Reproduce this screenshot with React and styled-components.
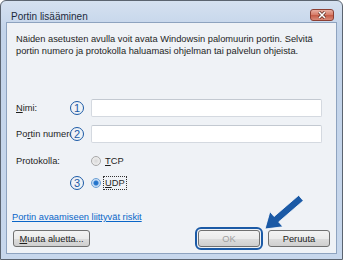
import React from "react";
import styled, { createGlobalStyle } from "styled-components";

const GlobalStyle = createGlobalStyle`
  html, body {
    margin: 0;
    padding: 0;
    background: #ffffff;
  }
  body {
    font-family: "Liberation Sans", Arial, sans-serif;
  }
`;

const Window = styled.div`
  position: relative;
  width: 343px;
  height: 260px;
  box-sizing: border-box;
  border: 1px solid #5b6470;
  border-radius: 6px 6px 0 0;
  background: linear-gradient(#d5e1f0, #c3d4ea 30px, #c7d7ec);
  display: flex;
  flex-direction: column;
  overflow: hidden;
`;

const TitleBar = styled.div`
  height: 22px;
  display: flex;
  align-items: center;
  justify-content: space-between;
  padding: 0 8px 0 10px;
`;

const Title = styled.span`
  font-size: 10px;
  color: #1c2a3c;
  margin-top: 10px;
`;

const CloseButton = styled.div`
  width: 22px;
  height: 10px;
  margin-top: 6px;
  border: 1px solid #8c3f33;
  border-radius: 3px;
  background: linear-gradient(#e8b0a3, #d67a66 50%, #c45a45 51%, #d98a78);
  display: flex;
  align-items: center;
  justify-content: center;
`;

const Client = styled.div`
  flex: 1;
  margin: 0 5px 5px;
  border: 1px solid #8ea3bf;
  background: #eff2f6;
  display: flex;
  flex-direction: column;
  padding: 10px 6px 6px 5px;
  font-size: 9.3px;
  color: #1e1e1e;
`;

const Intro = styled.p`
  margin: 0 0 0 4px;
  line-height: 12px;
`;

const Form = styled.div`
  display: grid;
  grid-template-columns: 54px 21px 1fr;
  align-items: center;
  margin: 42px 8px 0 4px;
`;

const Label = styled.span`
  grid-column: 1;
  margin-top: ${(p) => p.$top || 0}px;
  white-space: nowrap;
`;

const Marker = styled.span`
  grid-column: 2;
  position: relative;
  margin-top: ${(p) => p.$top || 0}px;
  width: 14px;
  height: 14px;
  box-sizing: border-box;
  border: 1px solid #1b5aa6;
  border-radius: 50%;
  color: #1b5aa6;
  font-size: 11px;
  line-height: 12px;
  text-align: center;
  background: #eff2f6;
`;

const Input = styled.div`
  grid-column: 3;
  margin-top: ${(p) => p.$top || 0}px;
  height: 18px;
  box-sizing: border-box;
  border: 1px solid #d4d9e0;
  border-top-color: #c3c9d1;
  border-radius: 2px;
  background: #ffffff;
`;

const RadioRow = styled.div`
  grid-column: 3;
  margin-top: ${(p) => p.$top || 0}px;
  display: flex;
  align-items: center;
  gap: 2px;
  height: 16px;
`;

const Radio = styled.span`
  width: 10px;
  height: 10px;
  box-sizing: border-box;
  border-radius: 50%;
  border: 1px solid ${(p) => (p.$checked ? "#6a9fd4" : "#a8a8a8")};
  background: ${(p) =>
    p.$checked
      ? "radial-gradient(circle, #1f6fc5 0, #2a7ad0 2px, #bcd6f2 3px, #e4eefa 5px)"
      : "radial-gradient(circle, #d8d8d8 0, #f4f4f4 5px)"};
`;

const RadioText = styled.span`
  padding: 1px 1px;
  border: 1px dotted ${(p) => (p.$focus ? "#333" : "transparent")};
  u {
    text-decoration: underline;
  }
`;

const Link = styled.a`
  margin-top: 20px;
  color: #0a66c8;
  text-decoration: underline;
  line-height: 12px;
`;

const Footer = styled.div`
  margin-top: 7px;
  display: flex;
  align-items: center;
`;

const Button = styled.button`
  width: ${(p) => p.$w || 62}px;
  height: 17px;
  padding: 0;
  margin-left: ${(p) => p.$ml || 0}px;
  box-sizing: border-box;
  border: 1px solid #707070;
  border-radius: 3px;
  background: linear-gradient(#f3f3f3, #ebebeb 50%, #dddddd 51%, #cfcfcf);
  font-family: "Liberation Sans", Arial, sans-serif;
  font-size: 9.3px;
  color: ${(p) => (p.disabled ? "#a0a0a0" : "#1e1e1e")};
  outline: ${(p) => (p.$highlight ? "2px solid #1b5aa6" : "none")};
  outline-offset: 1px;
  u {
    text-decoration: underline;
  }
`;

const Spacer = styled.div`
  flex: 1;
`;

const Arrow = styled.svg`
  position: absolute;
  left: 0;
  top: 0;
  pointer-events: none;
`;

export default function App() {
  return (
    <>
      <GlobalStyle />
      <Window>
        <TitleBar>
          <Title>Portin lisääminen</Title>
          <CloseButton>
            <svg width="10" height="8" viewBox="0 0 10 8">
              <path d="M2 1 L8 7 M8 1 L2 7" stroke="#5a2a20" strokeWidth="3" />
              <path d="M2 1 L8 7 M8 1 L2 7" stroke="#ffffff" strokeWidth="1.6" />
            </svg>
          </CloseButton>
        </TitleBar>
        <Client>
          <Intro>
            Näiden asetusten avulla voit avata Windowsin palomuurin portin. Selvitä
            <br />
            portin numero ja protokolla haluamasi ohjelman tai palvelun ohjeista.
          </Intro>
          <Form>
            <Label>
              <u>N</u>imi:
            </Label>
            <Marker>1</Marker>
            <Input />

            <Label $top={8}>
              Po<u>r</u>tin numero
            </Label>
            <Marker $top={8}>2</Marker>
            <Input $top={8} />

            <Label $top={10}>Protokolla:</Label>
            <RadioRow $top={10}>
              <Radio />
              <RadioText>
                <u>T</u>CP
              </RadioText>
            </RadioRow>

            <Marker $top={6}>3</Marker>
            <RadioRow $top={6}>
              <Radio $checked />
              <RadioText $focus>
                <u>U</u>DP
              </RadioText>
            </RadioRow>
          </Form>
          <Link>Portin avaamiseen liittyvät riskit</Link>
          <Footer>
            <Button $w={77} $ml={1}>
              <u>M</u>uuta aluetta...
            </Button>
            <Spacer />
            <Button disabled $highlight>
              OK
            </Button>
            <Button $ml={8}>Peruuta</Button>
          </Footer>
        </Client>
        <Arrow width="343" height="260" viewBox="0 0 343 260">
          <polygon
            points="297.7,194.3 273.1,215.5 268.9,210.6 264,228 281.9,225.8 277.7,220.9 302.3,199.7"
            fill="#1b5aa6"
            stroke="#ffffff"
            strokeWidth="0.8"
          />
        </Arrow>
      </Window>
    </>
  );
}
